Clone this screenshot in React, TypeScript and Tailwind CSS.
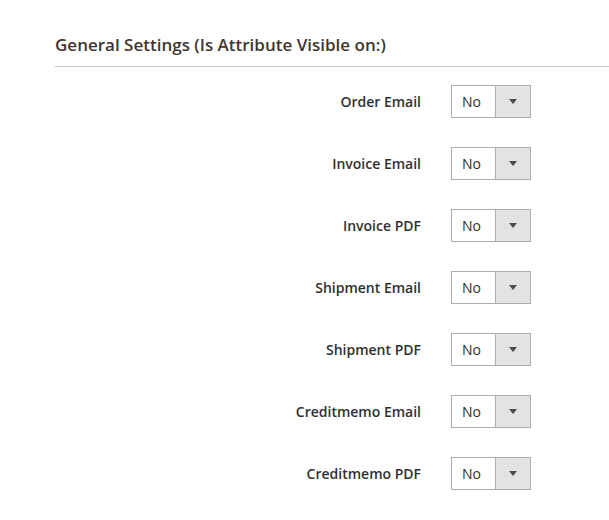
const rows = [
  "Order Email",
  "Invoice Email",
  "Invoice PDF",
  "Shipment Email",
  "Shipment PDF",
  "Creditmemo Email",
  "Creditmemo PDF",
];

function SelectBox() {
  return (
    <div className="flex h-[33px] w-[80px] border border-[#adadad] bg-white">
      <div className="flex flex-1 items-center pl-[10px] text-[14px] text-[#303030]">No</div>
      <div className="flex w-[35px] items-center justify-center border-l border-[#adadad] bg-[#e3e3e3]">
        <span className="h-0 w-0 border-x-[4px] border-t-[5px] border-x-transparent border-t-[#514943]" />
      </div>
    </div>
  );
}

export default function App() {
  return (
    <div className="min-h-[520px] w-[609px] bg-white font-['Open_Sans',sans-serif]">
      <div className="pl-[55px] pt-[34px]">
        <div className="border-b border-[#ccc5bb] pb-[11px] text-[17px] font-semibold leading-[21px] text-[#41362f]">
          General Settings (Is Attribute Visible on:)
        </div>
        <div className="flex flex-col gap-[29px] pt-[18px]">
          {rows.map((label) => (
            <div key={label} className="flex items-center">
              <div className="w-[366px] text-right text-[14px] font-semibold text-[#303030]">{label}</div>
              <div className="ml-[30px]">
                <SelectBox />
              </div>
            </div>
          ))}
        </div>
      </div>
    </div>
  );
}
